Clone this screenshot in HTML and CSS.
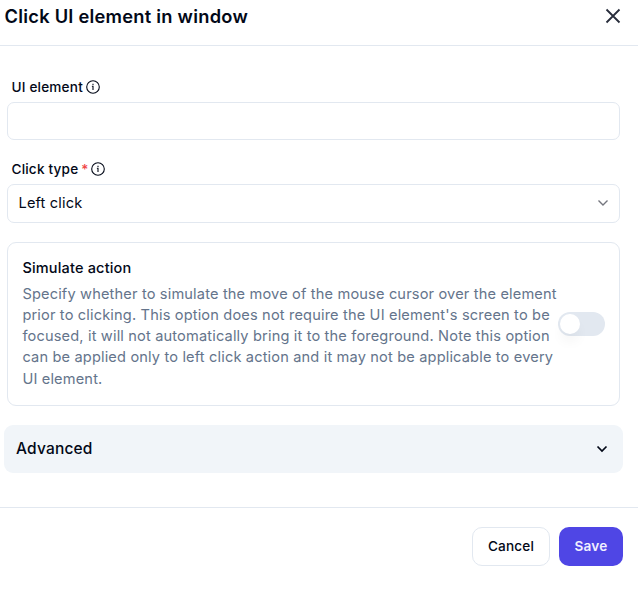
FILE: index.html
```html
<!DOCTYPE html>
<html lang="en">
<head>
<meta charset="utf-8">
<title>Click UI element in window</title>
<link rel="stylesheet" href="styles.css">
</head>
<body>
<div class="dialog">
  <header class="header">
    <h1 class="title">Click UI element in window</h1>
    <button class="close" aria-label="Close"><svg width="16" height="16" viewBox="0 0 16 16"><path d="M1.5 1.5l13 13M14.5 1.5l-13 13"/></svg></button>
  </header>
  <main class="content">
    <div class="label"><span>UI element</span><svg class="info" viewBox="0 0 14 14"><circle cx="7" cy="7" r="6.3"/><path d="M5.9 6.3H7v3.8M7 3.8v1.2"/></svg></div>
    <div class="field"></div>
    <div class="label second"><span>Click type</span><span class="required">*</span><svg class="info" viewBox="0 0 14 14"><circle cx="7" cy="7" r="6.3"/><path d="M5.9 6.3H7v3.8M7 3.8v1.2"/></svg></div>
    <div class="field select"><span>Left click</span><svg class="chevron" width="12" height="8" viewBox="0 0 12 8"><path d="M1.5 1.5L6 6l4.5-4.5"/></svg></div>
    <section class="card">
      <div class="card-text">
        <h2 class="card-title">Simulate action</h2>
        <p class="description">Specify whether to simulate the move of the mouse cursor over the element<br>prior to clicking. This option does not require the UI element's screen to be<br>focused, it will not automatically bring it to the foreground. Note this option<br>can be applied only to left click action and it may not be applicable to every<br>UI element.</p>
      </div>
      <div class="switch"><span class="thumb"></span></div>
    </section>
    <div class="advanced"><span>Advanced</span><svg class="chevron dark" width="12" height="8" viewBox="0 0 12 8"><path d="M1.5 1.5L6 6l4.5-4.5"/></svg></div>
  </main>
  <footer class="footer">
    <button class="button cancel">Cancel</button>
    <button class="button save">Save</button>
  </footer>
</div>
</body>
</html>
```
FILE: styles.css
```css
* { box-sizing: border-box; }
body { margin: 0; background: #fff; color: #020817; font-family: Inter, sans-serif; font-optical-sizing: none; }
button { font: inherit; }
.dialog { width: 638px; height: 602px; overflow: hidden; }
.header { height: 46px; display: flex; justify-content: space-between; padding: 4px 17px 0 4.5px; border-bottom: 1px solid #e2e8f0; }
.title { margin: 0; font-size: 18.3px; line-height: 25px; font-weight: 600; letter-spacing: 0.24px; }
.close { border: 0; padding: 0; background: none; color: #282d3b; width: 16px; height: 24px; display: flex; align-items: center; }
svg { fill: none; stroke: currentColor; flex: none; }
.close svg { stroke-width: 1.8; }
.content { height: 461px; padding: 31px 18px 0 7px; }
.label { height: 20px; display: flex; align-items: center; gap: 3px; padding: 0 0 1px 4.5px; margin-bottom: 5px; font-size: 13.6px; font-weight: 500; letter-spacing: 0.18px; }
.second { height: 19px; margin-top: 20px; margin-bottom: 5px; }
.required { color: #ef4444; }
.info { width: 14px; height: 14px; stroke-width: 1.1; position: relative; top: 0.5px; left: 0.5px; }
.second .info { left: -0.2px; top: 0; }
.field { height: 38px; border: 1px solid #e2e8f0; border-radius: 7px; }
.select { height: 39px; display: flex; align-items: center; justify-content: space-between; padding: 0 10px 1px 10.5px; font-size: 14.6px; letter-spacing: 0.15px; }
.chevron { color: #74767e; stroke-width: 1.4; }
.dark { color: #020817; stroke-width: 1.7; }
.card { height: 164px; margin-top: 19px; border: 1px solid #e2e8f0; border-radius: 9px; padding: 14px 14px 0; display: flex; justify-content: space-between; }
.card-text { width: 536px; flex: none; padding-left: 0.4px; }
.card-title { margin: 0 0 4.6px; font-size: 14.5px; line-height: 22px; font-weight: 500; letter-spacing: 0.18px; }
.description { margin: 0; color: #64748b; font-size: 14.6px; line-height: 21.25px; letter-spacing: 0.157px; white-space: nowrap; }
.switch { width: 47px; height: 24px; flex: none; margin-top: 55px; padding: 2px; border-radius: 12px; background: #e2e8f0; }
.thumb { display: block; width: 19.5px; height: 20px; border-radius: 50%; background: #fff; box-shadow: 0 9px 14px -3px #00000012; }
.advanced { height: 48px; margin: 19px -3px 0; padding: 0 15px 1px 12px; display: flex; align-items: center; justify-content: space-between; border-radius: 9px; background: #f1f5f9; font-size: 15.5px; font-weight: 500; letter-spacing: 0.18px; }
.advanced .chevron { position: relative; top: 0.5px; left: 0.3px; }
.footer { height: 95px; border-top: 1px solid #e2e8f0; display: flex; justify-content: flex-end; gap: 9px; padding: 19px 15px 0; }
.button { height: 39px; border-radius: 10px; font-size: 13.6px; font-weight: 500; letter-spacing: 0.15px; padding: 0 0 1px; }
.cancel { width: 78px; border: 1px solid #e2e8f0; background: #fff; color: #020817; }
.save { width: 64px; border: 0; background: #4f46e5; color: #f1efff; font-weight: 600; }
```
